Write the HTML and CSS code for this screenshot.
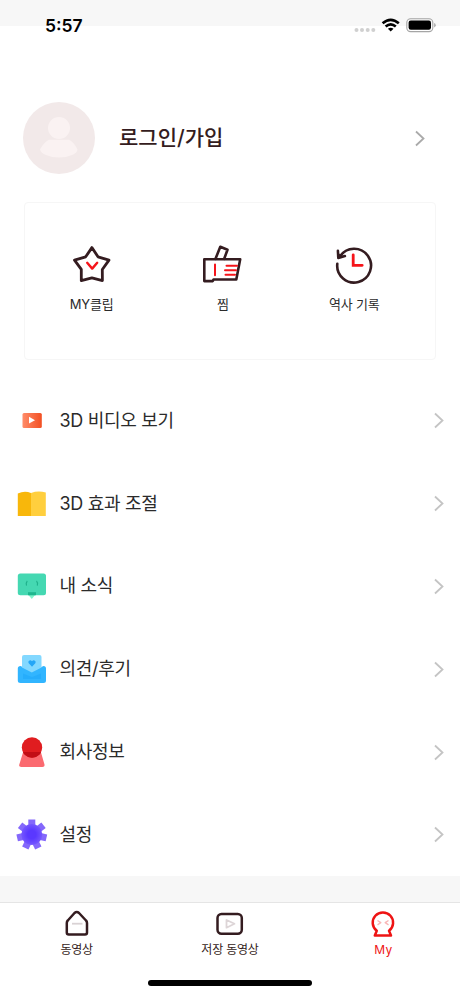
FILE: index.html
```html
<!DOCTYPE html>
<html lang="ko">
<head>
<meta charset="utf-8">
<title>My</title>
<link rel="stylesheet" href="styles.css">
</head>
<body>
<div class="screen">
  <header class="status">
    <span class="time">5:57</span>
    <svg class="signals" width="84" height="18" viewBox="353 16 84 18">
      <g fill="#d0d0d0"><circle cx="356.5" cy="30" r="2"/><circle cx="362" cy="30" r="2"/><circle cx="367.7" cy="30" r="2"/><circle cx="373.3" cy="30" r="2"/></g>
      <g fill="none" stroke="#000" stroke-width="2.6"><path d="M382.6 23.3Q390.7 16.4 398.8 23.3"/><path d="M385.6 26.5Q390.7 22.2 395.8 26.5"/></g>
      <path d="M387.9 28.7Q390.7 26.7 393.5 28.7L390.7 31.6Z"/>
      <rect x="406.8" y="18.8" width="26" height="12.8" rx="3.8" fill="none" stroke="#a5a5a5" stroke-width="1.1"/>
      <rect x="408.6" y="20.6" width="22.4" height="9.2" rx="2.2"/>
      <path d="M434.2 23v4.4q1.5-.6 1.5-2.2t-1.5-2.2Z" fill="#a5a5a5"/>
    </svg>
  </header>
  <section class="profile">
    <svg class="avatar" width="72" height="72" viewBox="23 102 72 72">
      <circle cx="59" cy="138" r="36" fill="#f2e9e9"/>
      <path d="M49 139.800H69Q74 142 77.500 149.500Q77 153 72 155Q66 157.500 59 157.500T46 155Q41 153 40 149.500Q44 142 49 139.800Z" fill="#faf2f2"/>
      <circle cx="59" cy="128" r="11" fill="#faf2f2"/>
    </svg>
    <h1>로그인/가입</h1>
    <svg class="go" width="12" height="17" viewBox="0 0 12 17"><path d="M2 1.500L9.500 8.500L2 15.500"/></svg>
  </section>
  <section class="card">
    <div class="item">
      <svg width="44" height="42" viewBox="69.500 244.700 44 42" fill="none" stroke="#341c20" stroke-width="2.800" stroke-linejoin="round" stroke-linecap="round">
        <path d="M91.400 248.300L97.500 257.500L108.500 260.800L101.800 270.200L101.900 281.300L91.400 278.500L80.800 281.300L80.800 270L74 260.800L85.200 257.500Z"/>
        <path d="M86.700 263.500L91.700 269.300L96.700 263.500" stroke="#f5141a" stroke-width="2.400"/>
      </svg>
      <span>MY클립</span>
    </div>
    <div class="item">
      <svg width="44" height="42" viewBox="201 244.700 44 42" fill="none" stroke="#341c20" stroke-width="2.600" stroke-linejoin="round" stroke-linecap="round">
        <path d="M204.300 260H240.200L236.300 280.200H213.500L212.800 281.800H204.300Z"/>
        <path d="M215.500 259.500L220.300 247.500L227.500 250.500L224.200 259.500"/>
        <g stroke="#f5141a" stroke-width="2"><path d="M215 265.200V276M226.500 266.500H237M225 271H236M225.500 275.500H235"/></g>
      </svg>
      <span>찜</span>
    </div>
    <div class="item">
      <svg width="44" height="42" viewBox="332.300 244.700 44 42" fill="none" stroke="#341c20" stroke-width="2.600" stroke-linejoin="round" stroke-linecap="round">
        <path d="M340.300 257A16.900 16.900 0 1 1 337.600 264.500M338.200 251.500L338.600 258.700L345.200 256.800"/>
        <path d="M338.400 254L343 257.300L338.700 258.600Z" fill="#341c20" stroke-width="1"/>
        <path d="M353.500 255.500V266H362.500" stroke="#f5141a" stroke-width="2.800" stroke-linejoin="miter"/>
      </svg>
      <span>역사 기록</span>
    </div>
  </section>
  <nav class="menu">
    <a class="row">
      <svg class="icon" width="32" height="34" viewBox="16 404 32 34">
        <defs><linearGradient id="video"><stop stop-color="#ff8c69"/><stop offset="1" stop-color="#f24f22"/></linearGradient></defs>
        <rect x="22.500" y="413" width="19.300" height="15" rx="1.500" fill="url(#video)"/><path d="M29 416.800L35 420.200L29 423.400Z" fill="#fff"/>
      </svg>
      <span>3D 비디오 보기</span>
      <svg class="go" width="12" height="17" viewBox="0 0 12 17"><path d="M2 1.500L9.500 8.500L2 15.500"/></svg>
    </a>
    <a class="row">
      <svg class="icon" width="32" height="34" viewBox="16 487 32 34">
        <path d="M17.800 493.500Q24.500 490.500 31 493V516H17.800Z" fill="#f8b70b"/><path d="M31 493Q38 490.500 45.800 492.500V516H31Z" fill="#ffcf3e"/>
      </svg>
      <span>3D 효과 조절</span>
      <svg class="go" width="12" height="17" viewBox="0 0 12 17"><path d="M2 1.500L9.500 8.500L2 15.500"/></svg>
    </a>
    <a class="row">
      <svg class="icon" width="32" height="34" viewBox="16 570 32 34">
        <path d="M28 595.500H35.500L31.800 600Z" fill="#80f5cb"/><rect x="17.800" y="574.400" width="28.200" height="21.800" rx="2.500" fill="#45d8b2"/>
        <path d="M28 593.200H36V596.200H28Z" fill="#1eb78e"/><path d="M27.300 582Q25.800 583.500 26.500 586.500M36.500 582Q38 583.500 37.300 586.500" fill="none" stroke="#20b18c" stroke-width="1.100"/>
      </svg>
      <span>내 소식</span>
      <svg class="go" width="12" height="17" viewBox="0 0 12 17"><path d="M2 1.500L9.500 8.500L2 15.500"/></svg>
    </a>
    <a class="row">
      <svg class="icon" width="32" height="34" viewBox="16 652 32 34">
        <path d="M17.800 668.500Q17.800 666 20.500 666L32 671.500L43.500 666Q46 666 46 668.500V680.500Q46 683 43.500 683H20.500Q17.800 683 17.800 680.500Z" fill="#31b5ff"/>
        <path d="M23 673.500L32 677L41 673.500V679H23Z" fill="#20a8fa" opacity=".6"/>
        <path d="M22 657Q22 655 24 655H39.500Q41.500 655 41.500 657V667.500L31.800 672.500L22 667.500Z" fill="#83d8ff"/>
        <path d="M32 666.800L28.500 663Q27.800 661 29.500 660.400Q31 660 32 661.300Q33 660 34.500 660.400Q36.200 661 35.500 663Z" fill="#25a6f7"/>
      </svg>
      <span>의견/후기</span>
      <svg class="go" width="12" height="17" viewBox="0 0 12 17"><path d="M2 1.500L9.500 8.500L2 15.500"/></svg>
    </a>
    <a class="row">
      <svg class="icon" width="32" height="34" viewBox="16 735 32 34">
        <defs><clipPath id="body"><path d="M23 752H41L44.500 764.500Q45 767 42.500 767H21.200Q18.500 767 19.300 764.500Z"/></clipPath></defs>
        <path d="M23 752.500H41L44.500 764.500Q45 767 42.500 767H21.200Q18.500 767 19.300 764.500Z" fill="#fb6a70"/>
        <circle cx="32" cy="747.500" r="10.200" fill="#e01d20"/><circle cx="32" cy="747.500" r="10.200" fill="#c20e16" clip-path="url(#body)"/>
      </svg>
      <span>회사정보</span>
      <svg class="go" width="12" height="17" viewBox="0 0 12 17"><path d="M2 1.500L9.500 8.500L2 15.500"/></svg>
    </a>
    <a class="row">
      <svg class="icon" width="32" height="34" viewBox="16 818 32 34">
        <defs><radialGradient id="gear"><stop offset=".4" stop-color="#5a38ff"/><stop offset="1" stop-color="#7557ff"/></radialGradient><path id="tooth" d="M28.300 819.500H35.300V829H28.300Z"/></defs>
        <g fill="#8468fb"><use href="#tooth"/><use href="#tooth" transform="rotate(51.430 31.800 834.500)"/><use href="#tooth" transform="rotate(102.860 31.800 834.500)"/><use href="#tooth" transform="rotate(154.290 31.800 834.500)"/><use href="#tooth" transform="rotate(205.710 31.800 834.500)"/><use href="#tooth" transform="rotate(257.140 31.800 834.500)"/><use href="#tooth" transform="rotate(308.570 31.800 834.500)"/></g>
        <circle cx="31.800" cy="834.500" r="10.500" fill="url(#gear)"/>
      </svg>
      <span>설정</span>
      <svg class="go" width="12" height="17" viewBox="0 0 12 17"><path d="M2 1.500L9.500 8.500L2 15.500"/></svg>
    </a>
  </nav>
  <div class="gap"></div>
  <footer class="tabs">
    <div class="tab">
      <svg width="32" height="30" viewBox="61 909 32 30" fill="none" stroke="#341c20" stroke-width="2.500" stroke-linejoin="round">
        <path d="M74.500 913Q76.800 911 79 913L86 920.500Q87 921.500 87 923V932.500Q87 934.500 85 934.500H68.800Q66.800 934.500 66.800 932.500V923Q66.800 921.500 67.800 920.500Z"/><path d="M72 923.700H82.500" stroke="#d9d2d4" stroke-width="1.800"/>
      </svg>
      <span>동영상</span>
    </div>
    <div class="tab">
      <svg width="32" height="30" viewBox="214 909 32 30" fill="none" stroke="#341c20" stroke-width="2.500" stroke-linejoin="round">
        <rect x="217.500" y="914" width="24.300" height="19.700" rx="4"/><path d="M226.500 920V927.700L234.500 923.800Z" stroke="#ddd5d7" stroke-width="1.800"/>
      </svg>
      <span>저장 동영상</span>
    </div>
    <div class="tab active">
      <svg width="32" height="30" viewBox="367 909 32 30" fill="none" stroke="#ee1414" stroke-width="2.500" stroke-linejoin="round">
        <path d="M376.800 930.800A10.200 10.200 0 1 1 389 930.800L391 935.500H374.800Z"/><path d="M377.500 920.500L380.800 922.700L377.500 924.800M388.500 920.500L385.200 922.700L388.500 924.800" stroke="#f9b5b5" stroke-width="1.400"/>
      </svg>
      <span>My</span>
    </div>
  </footer>
  <div class="home"></div>
</div>
</body>
</html>
```
FILE: styles.css
```css
* { box-sizing: border-box; }
body { margin: 0; background: #fff; font-family: Inter, "Noto Sans CJK KR", sans-serif; color: #2b2b2b; }
svg { display: block; flex: none; }
.screen { width: 460px; height: 996px; overflow: hidden; display: flex; flex-direction: column; }
.status { height: 74px; flex: none; display: flex; justify-content: space-between; align-items: flex-start; padding: 16px 23px 0 45px; background: linear-gradient(#f7f7f7 26px, #fff 26px); }
.time { font: 600 17.5px/20px Inter, sans-serif; color: #000; }
.profile { height: 128px; flex: none; display: flex; align-items: center; padding: 0 34px 0 23px; }
h1 { margin: 0 0 0 24px; font-size: 21px; line-height: 30px; font-weight: 500; color: #341c20; }
.go { margin-left: auto; fill: none; stroke: #c4c4c4; stroke-width: 1.8; }
.profile .go { stroke: #aaa; }
.card { margin: 0 24px 0 24px; height: 158px; flex: none; border: 1.5px solid #f6f6f6; border-radius: 4px; display: grid; grid-template-columns: repeat(3, 131.3px); padding-top: 41px; padding-left: 1px; }
.item { display: flex; flex-direction: column; align-items: center; gap: 9px; font-size: 13px; line-height: 18px; letter-spacing: -0.2px; }
.menu { margin-top: 19.5px; flex: none; }
.row { height: 82.8px; display: flex; align-items: center; padding: 0 15px 0 16px; font-size: 18px; line-height: 28px; letter-spacing: -0.3px; }
.row span { margin-left: 11.5px; }
.gap { height: 26px; flex: none; background: #f7f7f7; }
.tabs { height: 78px; flex: none; border-top: 1px solid #e5e5e5; display: grid; grid-template-columns: repeat(3, 1fr); padding-top: 6px; }
.tab { display: flex; flex-direction: column; align-items: center; gap: 2px; font-size: 12px; line-height: 18px; letter-spacing: -0.2px; color: #341c20; }
.active { color: #ee1414; letter-spacing: 0.2px; }
.home { width: 164px; height: 6px; flex: none; border-radius: 3px; background: #000; align-self: center; }
```
